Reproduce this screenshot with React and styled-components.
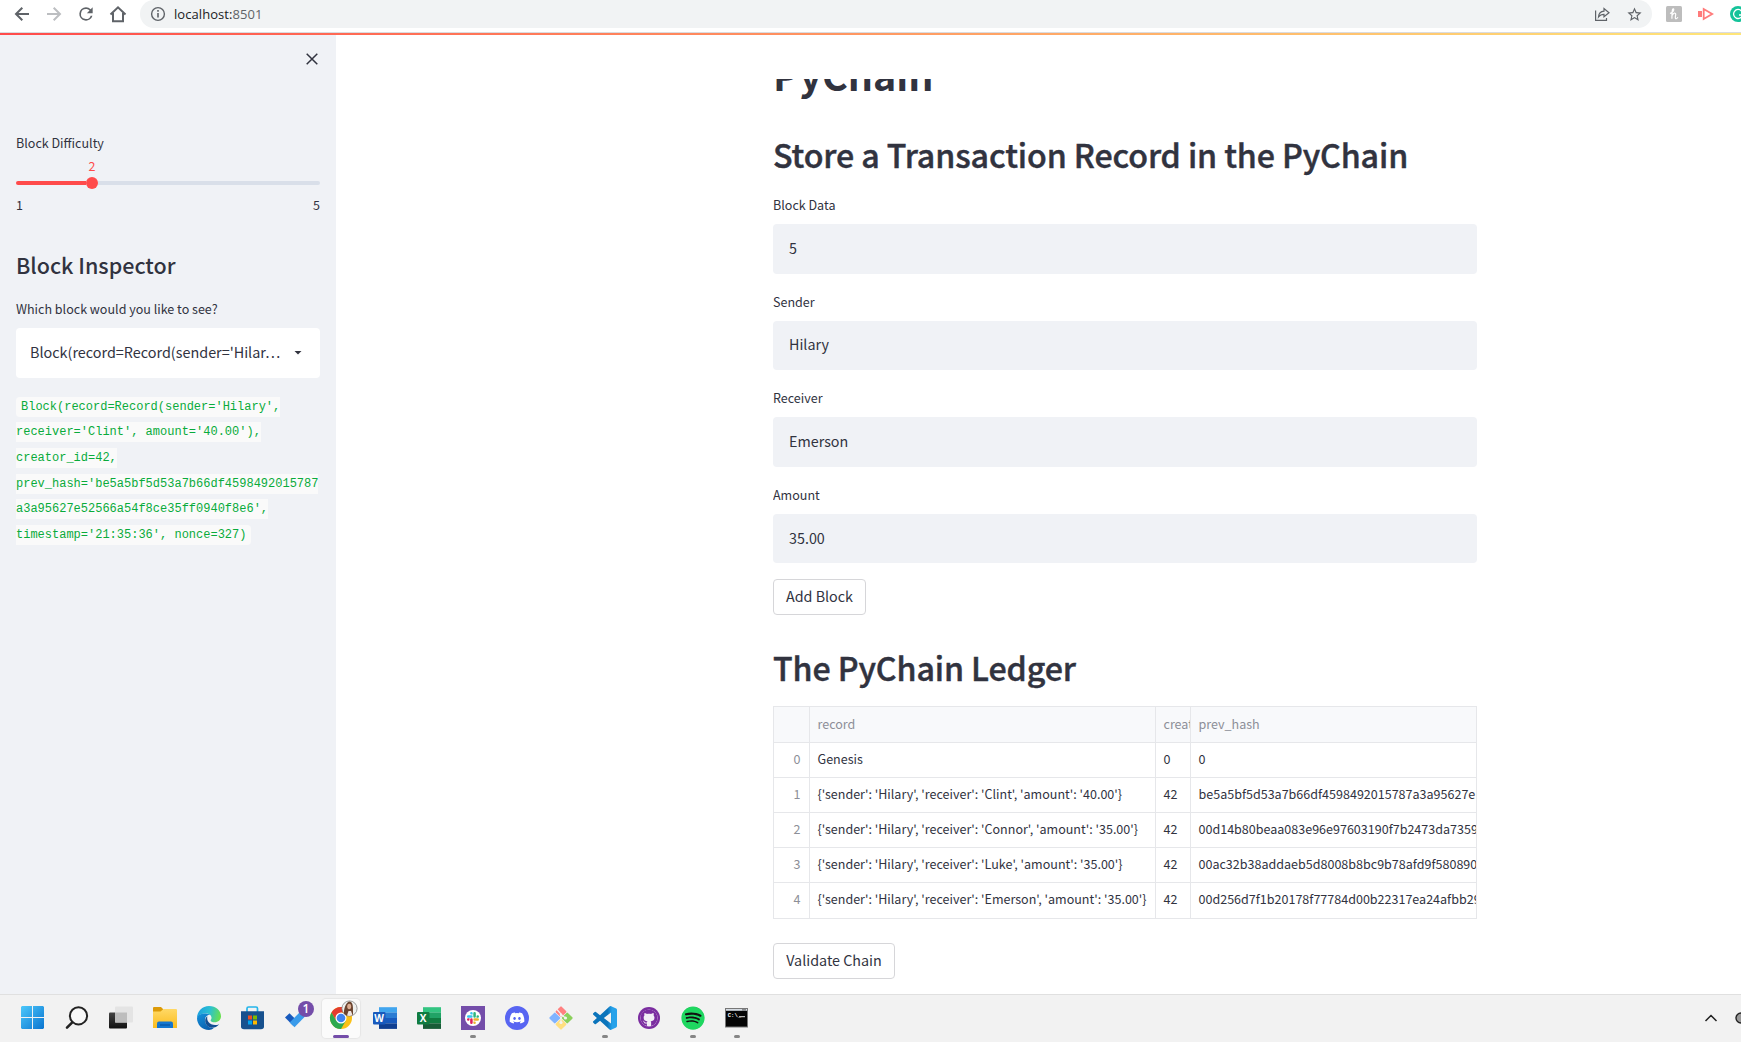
import React from "react";
import styled, { createGlobalStyle, css } from "styled-components";
import { FaDiscord, FaGithub, FaSpotify } from "react-icons/fa";

const SANS = `"Noto Sans CJK SC", "Noto Sans", sans-serif`;
const MONO = `"Liberation Mono", monospace`;

const GlobalStyle = createGlobalStyle`
  * { box-sizing: border-box; }
  html, body { margin: 0; padding: 0; overflow: hidden; }
  body { background: #fff; font-family: ${SANS}; color: #31333f; }
`;

const Screen = styled.div`
  width: 1741px;
  height: 1042px;
  display: flex;
  flex-direction: column;
  overflow: hidden;
`;

/* ---------- browser bar ---------- */
const BrowserBar = styled.header`
  flex: none;
  height: 33px;
  display: flex;
  align-items: flex-start;
  border-bottom: 1px solid #dadce0;
  padding-left: 12px;
  overflow: hidden;
`;

const NavButtons = styled.div`
  flex: none;
  width: 128px;
  height: 28px;
  display: flex;
  align-items: center;
  gap: 12px;
  svg { display: block; flex: none; }
`;

const AddressPill = styled.div`
  width: 1512px;
  height: 28px;
  flex: none;
  border-radius: 0 14px 14px 0;
  border-radius: 14px;
  background: #f1f3f4;
  display: flex;
  align-items: center;
  padding: 0 9px 0 8px;
  svg { display: block; flex: none; }
`;

const Address = styled.span`
  flex: 1;
  margin-left: 6px;
  font: 13px/20px "Open Sans", "Noto Sans", sans-serif;
  letter-spacing: 0.06px;
  color: #202124;
`;

const Port = styled.span`
  color: #5f6368;
`;

const Extensions = styled.div`
  display: flex;
  align-items: center;
  gap: ${(p) => p.$gap || 16}px;
  height: 28px;
  margin-left: 14px;
  flex: none;
  svg { display: block; flex: none; }
`;

const Decoration = styled.div`
  flex: none;
  height: 2px;
  background: linear-gradient(90deg, #ff4b4b, #fffd80 115%);
`;

/* ---------- page ---------- */
const Page = styled.div`
  flex: none;
  height: 959px;
  display: flex;
`;

const Sidebar = styled.aside`
  width: 336px;
  flex: none;
  background: #f0f2f6;
  padding: 16px 16px 0;
  display: flex;
  flex-direction: column;
`;

const CloseRow = styled.div`
  height: 16px;
  display: flex;
  justify-content: flex-end;
  svg { display: block; }
`;

const Label = styled.div`
  margin-top: ${(p) => p.$top || 0}px;
  padding-top: 1px;
  font-size: 12.54px;
  line-height: 21px;
  height: 22px;
  white-space: nowrap;
`;

const Slider = styled.div`
  margin-top: 2px;
  display: flex;
  flex-direction: column;
`;

const SliderValue = styled.div`
  width: 152px;
  height: 22px;
  line-height: 22px;
  text-align: center;
  font-size: 12.54px;
  color: #ff4b4b;
`;

const Track = styled.div`
  height: 12px;
  display: flex;
  align-items: center;
`;

const TrackPart = styled.div`
  height: 4px;
  width: ${(p) => p.$w}px;
  background: ${(p) => p.$c};
  border-radius: ${(p) => p.$r};
`;

const Thumb = styled.div`
  width: 12px;
  height: 12px;
  border-radius: 50%;
  background: #ff4b4b;
`;

const SliderEnds = styled.div`
  display: flex;
  justify-content: space-between;
  margin-top: 5px;
  font-size: 12.54px;
  line-height: 22px;
`;

const SideTitle = styled.h2`
  margin: 34px 0 0;
  font-size: 21.5px;
  line-height: 29px;
  font-weight: 500;
`;

const SelectBox = styled.div`
  margin-top: 8.5px;
  height: 50px;
  border-radius: 4px;
  background: #fff;
  display: flex;
  align-items: center;
  justify-content: space-between;
  padding: 0 16px 2px 14px;
  font-size: 14.4px;
  line-height: 24px;
  white-space: nowrap;
`;

const CodeBlock = styled.div`
  margin-top: 16.5px;
  display: flex;
  flex-direction: column;
  align-items: flex-start;
`;

const CodeLine = styled.div`
  height: 25.6px;
  display: flex;
  align-items: center;
`;

const Code = styled.code`
  display: block;
  height: 20px;
  line-height: 20px;
  font-family: ${MONO};
  font-size: 12px;
  color: #09ab3b;
  background: #fafafa;
  white-space: pre;
  ${(p) => p.$first && css`padding-left: 5px; border-radius: 4px 0 0 4px;`}
  ${(p) => p.$last && css`padding-right: 5px; border-radius: 0 4px 4px 0;`}
`;

const Main = styled.main`
  flex: 1;
  padding: 44px 0 0 437px;
`;

const Viewport = styled.div`
  width: 704px;
  height: 915px;
  overflow: hidden;
`;

const Title = styled.h1`
  margin: -32.5px 0 0;
  font-size: 39.4px;
  line-height: 53px;
  font-weight: 700;
`;

const Heading = styled.h2`
  margin: ${(p) => p.$top}px 0 0;
  font-size: 32.2px;
  line-height: 43px;
  font-weight: 500;
  letter-spacing: -0.11px;
  -webkit-text-stroke: 0.45px #31333f;
  white-space: nowrap;
`;

const Form = styled.div`
  margin-top: 17px;
  display: flex;
  flex-direction: column;
  gap: 16px;
`;

const Field = styled.div`
  display: flex;
  flex-direction: column;
  gap: 9px;
`;

const Input = styled.div`
  height: 49.6px;
  border-radius: 4px;
  background: #f0f2f6;
  padding: 0 16px 2px;
  display: flex;
  align-items: center;
  font-size: 14.33px;
  line-height: 24px;
`;

const Button = styled.button`
  display: block;
  height: 36px;
  width: ${(p) => p.$w}px;
  margin: ${(p) => p.$top}px 0 0;
  padding: 0 0 2px;
  border: 1px solid #d6d6d9;
  border-radius: 4px;
  background: #fff;
  font-family: ${SANS};
  font-size: 14.33px;
  line-height: 24px;
  color: #31333f;
  white-space: nowrap;
`;

const Table = styled.div`
  margin-top: 17px;
  width: 704px;
  height: 213px;
  border: 1px solid #e6e7ea;
  overflow: hidden;
`;

const Cell = styled.div`
  border-right: 1px solid #e6e7ea;
  border-bottom: 1px solid #e6e7ea;
  padding: 0 0 2px 7.5px;
  ${(p) => p.$index && css`padding: 0 8.5px 2px 0; text-align: right;`}
  ${(p) => p.$end && css`border-right: 0;`}
  font-size: 12.54px;
  line-height: ${(p) => (p.$muted && !p.$index ? 33 : 32)}px;
  color: ${(p) => (p.$muted ? "#8d8f98" : "#31333f")};
  white-space: nowrap;
  overflow: hidden;
`;

const Row = styled.div`
  display: grid;
  grid-template-columns: 36px 346px 35px 285px;
  height: ${(p) => (p.$head ? 36 : 35)}px;
  background: ${(p) => (p.$head ? "#f8f9fb" : "#fff")};
  &:last-child { height: 36px; }
  &:last-child ${Cell} { border-bottom: 0; }
`;

/* ---------- taskbar ---------- */
const Taskbar = styled.footer`
  flex: 1;
  display: flex;
  justify-content: space-between;
  background: #f2f2f2;
  border-top: 1px solid #e0e0e0;
  padding-left: 11px;
`;

const Apps = styled.div`
  display: flex;
`;

const AppSlot = styled.div`
  width: 44px;
  height: 47px;
  display: flex;
  flex-direction: column;
  align-items: center;
  padding-top: 3.5px;
`;

const Tile = styled.div`
  position: relative;
  width: 38px;
  height: 39px;
  display: flex;
  align-items: center;
  justify-content: center;
  border-radius: 4px;
  ${(p) => p.$active && css`background: #fbfbfb; box-shadow: 0 0 1px 1px #e6e6e6;`}
  svg { display: block; overflow: visible; }
`;

const Indicator = styled.span`
  position: absolute;
  left: ${(p) => (p.$active ? 11 : 16)}px;
  bottom: 0;
  width: ${(p) => (p.$active ? 16 : 6)}px;
  height: 3px;
  border-radius: 2px;
  background: ${(p) => (p.$active ? "#744da9" : "#858585")};
`;

const Badge = styled.span`
  position: absolute;
  left: 20px;
  top: 2px;
  width: 16px;
  height: 16px;
  border-radius: 50%;
  background: #744da9;
  color: #fff;
  font: 600 12px/16px "Open Sans", sans-serif;
  text-align: center;
`;

const Disc = styled.span`
  width: 24px;
  height: 24px;
  border-radius: 50%;
  background: #5865f2;
  color: #fff;
  display: flex;
  align-items: center;
  justify-content: center;
`;

const Tray = styled.div`
  display: flex;
  align-items: center;
  gap: 17px;
  padding-bottom: 2px;
  svg { display: block; }
`;

/* ---------- icons ---------- */
const stroke = { fill: "none", stroke: "#5f6368", strokeWidth: 2 };

const BackIcon = ({ color = "#5f6368", flip }) => (
  <svg width="20" height="20" viewBox="0 0 20 20">
    <path d="M17 10H4.5M10.3 3.7L4 10l6.3 6.3" {...stroke} stroke={color}
      transform={flip ? "matrix(-1 0 0 1 20 0)" : undefined} />
  </svg>
);

const ReloadIcon = () => (
  <svg width="20" height="20" viewBox="0 0 24 24">
    <path fill="#5f6368" d="M17.65 6.35A7.96 7.96 0 0 0 12 4a8 8 0 1 0 7.73 10h-2.08A6 6 0 1 1 12 6c1.66 0 3.14.69 4.22 1.78L13 11h7V4z" />
  </svg>
);

const HomeIcon = () => (
  <svg width="20" height="20" viewBox="0 0 20 20">
    <path d="M2.500 10.500L10 3.300l7.500 7.200M5 9V17.200h10V9" {...stroke} />
  </svg>
);

const InfoIcon = () => (
  <svg width="20" height="20" viewBox="0 0 20 20">
    <circle cx="10" cy="10" r="6.400" fill="none" stroke="#5f6368" strokeWidth="1.400" />
    <path d="M10 9v4.500M10 6v1.700" stroke="#5f6368" strokeWidth="1.600" />
  </svg>
);

const ShareIcon = () => (
  <svg width="16" height="16" viewBox="0 0 16 16" fill="none" stroke="#5f6368" strokeWidth="1.200">
    <path d="M1.600 4.500V14.400H12.500V12" />
    <path d="M4.500 11C4.800 7.300 6.600 5.400 10 5.200V2.600L15 6.700l-5 4.100V8.300C7.500 8.300 5.800 9.200 4.500 11z" />
  </svg>
);

const StarIcon = () => (
  <svg width="17" height="17" viewBox="0 0 24 24">
    <path fill="#5f6368" d="M22 9.240l-7.190-.620L12 2 9.190 8.630 2 9.240l5.460 4.730L5.820 21 12 17.270 18.180 21l-1.630-7.030zM12 15.400l-3.760 2.270 1-4.280-3.320-2.880 4.380-.380L12 6.100l1.710 4.040 4.380.380-3.320 2.880 1 4.280z" />
  </svg>
);

const HoneyIcon = () => (
  <svg width="16" height="16" viewBox="0 0 16 16">
    <rect width="16" height="16" rx="1.500" fill="#bdbdbd" />
    <path d="M4 7.500C7 6.500 8.500 3.500 7.400 2.900 6.300 2.500 6 5 5.900 12.800M6 9.500c1.200-3 4-3.200 3.700-1-.2 2-.9 4.300.3 4.300.8 0 1.400-.7 1.900-1.500" fill="none" stroke="#fff" strokeWidth="1.200" />
  </svg>
);

const CastIcon = () => (
  <svg width="16" height="14" viewBox="0 0 16 14">
    <rect x="0" y="4" width="4" height="6" fill="#ff7b7b" />
    <path d="M5.700 2V12L14.200 7z" fill="#fff" stroke="#ff7b7b" strokeWidth="1.800" />
  </svg>
);

const GrammarIcon = () => (
  <svg width="16" height="16" viewBox="0 0 16 16">
    <circle cx="8" cy="8" r="8" fill="#15c39a" />
    <path d="M11.500 5A4.500 4.500 0 1 0 12.500 9H9M12.500 9v3" fill="none" stroke="#fff" strokeWidth="1.300" />
  </svg>
);

const CloseIcon = () => (
  <svg width="16" height="16" viewBox="0 0 16 16">
    <path d="M2.700 2.700l10.600 10.600M13.300 2.700L2.700 13.300" stroke="#31333f" strokeWidth="1.500" />
  </svg>
);

const CaretIcon = () => (
  <svg width="12" height="8" viewBox="0 0 12 8">
    <path d="M2.500 3h7L6 6.600z" fill="#31333f" />
  </svg>
);

const WindowsIcon = () => (
  <svg width="24" height="24" viewBox="0 0 24 24">
    <defs>
      <linearGradient id="win" x1="0" y1="0" x2="1" y2="1" gradientUnits="objectBoundingBox">
        <stop offset="0" stopColor="#4cc8fb" />
        <stop offset="1" stopColor="#0a74d0" />
      </linearGradient>
    </defs>
    <path d="M1 0H11V11H0V1zM12 0H22L23 1V11H12zM0 12H11V23H1L0 22zM12 12H23V22L22 23H12z" fill="url(#win)" />
  </svg>
);

const SearchIcon = () => (
  <svg width="24" height="24" viewBox="0 0 24 24">
    <circle cx="13.500" cy="9.800" r="8.600" fill="#f7f7f7" stroke="#222" strokeWidth="2" />
    <path d="M7.300 16.300L2 21.600" stroke="#222" strokeWidth="2.600" strokeLinecap="round" />
  </svg>
);

const TaskViewIcon = () => (
  <svg width="24" height="24" viewBox="0 0 24 24">
    <defs>
      <linearGradient id="tv" x1="0" y1="0" x2="0" y2="1">
        <stop offset="0" stopColor="#444" />
        <stop offset="1" stopColor="#111" />
      </linearGradient>
    </defs>
    <rect x="0" y="6.500" width="18" height="16" rx="1" fill="url(#tv)" />
    <rect x="6" y=".5" width="18" height="16" rx="1" fill="#e4e4e4" />
    <rect x="6" y="6.500" width="12" height="10" fill="#bdbdbd" />
  </svg>
);

const FolderIcon = () => (
  <svg width="24" height="24" viewBox="0 0 24 24">
    <defs>
      <linearGradient id="fold" x1="0" y1="0" x2="0" y2="1">
        <stop offset="0" stopColor="#ffd966" />
        <stop offset="1" stopColor="#fbbc1e" />
      </linearGradient>
    </defs>
    <path d="M0 2Q0 1 1 1H8L10 3V7H0z" fill="#dc9a08" />
    <path d="M0 5.500H7.500L10.500 3H23Q24 3 24 4V22H0z" fill="url(#fold)" />
    <path d="M4 22V17.500Q4 15.500 6 15.500H18Q20 15.500 20 17.500V22z" fill="#1476cf" />
    <path d="M7 19H17" stroke="#095aa8" strokeWidth="1.500" />
  </svg>
);

const EdgeIcon = () => (
  <svg width="24" height="24" viewBox="0 0 24 24">
    <defs>
      <linearGradient id="edgeTop" x1="0" y1="0.300" x2="1" y2="0.500">
        <stop offset="0" stopColor="#1c9fe0" />
        <stop offset="0.500" stopColor="#2bc0d2" />
        <stop offset="1" stopColor="#67e04e" />
      </linearGradient>
      <linearGradient id="edgeSide" x1="0" y1="0" x2="0.600" y2="1">
        <stop offset="0" stopColor="#1593dc" />
        <stop offset="1" stopColor="#0a5fae" />
      </linearGradient>
    </defs>
    <path d="M0 12C.2 5 5.200 0 12 0 19 0 24 4.700 24 10.300c0 3.800-3 6-6.200 6-2.500 0-4.200-.9-4.200-1.900 0-.7.900-1 .9-2.600C14.500 9 12 7.400 9 7.400 4.500 7.400 1 9.500 0 12z" fill="url(#edgeTop)" />
    <path d="M0 12C.9 8.300 5 7.400 8.500 7.400c3 0 4.500 1.300 4.500 1.300C9.500 8.800 7.500 12 8 15c.7 5 5.500 7.500 9 6.800C15.500 23.200 13.500 24 12 24 5 24 0 18.500 0 12z" fill="url(#edgeSide)" />
    <path d="M10.500 10.200C7.500 12 7.300 17 10.500 20c3.300 2.900 8.500 2.200 11.700-1.800-4 1.800-8.700.7-10.700-2.200-1.500-2-1.600-4.200-1-5.800z" fill="#124f93" />
  </svg>
);

const StoreIcon = () => (
  <svg width="24" height="24" viewBox="0 0 24 24">
    <path d="M6 6V2.500Q6 1 7.500 1H15Q16.500 1 16.500 2.500V6" fill="none" stroke="#24b5ea" strokeWidth="1.700" />
    <path d="M0 5.200H23V20.500Q23 23.200 20 23.200H3Q0 23.200 0 20.500z" fill="#17518e" />
    <path d="M7 9.500h4v4h-4z" fill="#f25022" />
    <path d="M12 9.500h4v4h-4z" fill="#7fba00" />
    <path d="M7 14.500h4v4h-4z" fill="#00a4ef" />
    <path d="M12 14.500h4v4h-4z" fill="#ffb900" />
  </svg>
);

const TodoIcon = () => (
  <svg width="24" height="24" viewBox="0 0 24 24">
    <path d="M0 11.500L4.500 7.200l8 8-4.300 4.600z" fill="#185abd" />
    <path d="M4.700 16.500L15.500 5.500l5 4.500L9.500 21.300z" fill="#3a9bea" />
  </svg>
);

const ChromeIcon = () => (
  <svg width="24" height="24" viewBox="0 0 24 24">
    <circle cx="12" cy="12" r="11" fill="#fbc116" />
    <path d="M2.470 6.500A11 11 0 0 1 21.530 6.500H12L7.240 14.750z" fill="#e33b2e" />
    <path d="M2.470 6.500A11 11 0 0 0 12 23L16.760 14.750H7.240z" fill="#2da94f" />
    <circle cx="12" cy="12" r="5.500" fill="#fff" />
    <circle cx="12" cy="12" r="4.300" fill="#3f83f0" />
    <g transform="translate(20.500 2.500)">
      <circle r="7.600" fill="#eef0ef" stroke="#777" strokeWidth="0.700" />
      <path d="M-5.500 5.200C-6 2-4-6.500 0-7 4-6.500 3.500 0 3.500 3L3.500 6.500Q-2 9-5.500 5.200z" fill="#6b4430" />
      <ellipse cx="-.3" cy="-2" rx="2" ry="2.800" fill="#dcae94" />
      <path d="M-2.500 7L-1 2.500H1.500L3 6.500Q0 8-2.500 7z" fill="#efe5df" />
    </g>
  </svg>
);

const OfficeIcon = ({ letter, shades, tile }) => (
  <svg width="24" height="24" viewBox="0 0 24 24">
    {shades.map((c, i) => (
      <rect key={c} x="6" y={1.200 + i * 5.400} width="18" height="5.500" fill={c} />
    ))}
    <rect x="0" y="6" width="12.500" height="12.500" rx="1" fill={tile} />
    <text x="6.200" y="15.800" fontSize="10" fontWeight="700" fill="#fff" textAnchor="middle" fontFamily="Open Sans, sans-serif">{letter}</text>
  </svg>
);

const slackColours = ["#e01e5a", "#36c5f0", "#2eb67d", "#ecb22e"];

const SlackIcon = () => (
  <svg width="24" height="24" viewBox="0 0 24 24">
    <rect width="24" height="24" fill="#744da9" />
    <circle cx="12" cy="12" r="8" fill="#fff" />
    <g transform="translate(6 6) scale(0.500)">
      {slackColours.map((c, i) => (
        <path
          key={c}
          fill={c}
          transform={`rotate(${i * 90} 12 12)`}
          d="M5.042 15.165a2.528 2.528 0 0 1-2.520 2.523A2.528 2.528 0 0 1 0 15.165a2.527 2.527 0 0 1 2.522-2.520h2.520v2.520zM6.313 15.165a2.527 2.527 0 0 1 2.521-2.520 2.527 2.527 0 0 1 2.521 2.520v6.313A2.528 2.528 0 0 1 8.834 24a2.528 2.528 0 0 1-2.521-2.522v-6.313z"
        />
      ))}
    </g>
  </svg>
);

const GitIcon = () => (
  <svg width="24" height="24" viewBox="0 0 24 24">
    <g transform="rotate(45 12 12)">
      <rect x="3.500" y="3.500" width="8.200" height="8.200" rx="1" fill="#ff8080" />
      <rect x="12.300" y="3.500" width="8.200" height="8.200" rx="1" fill="#8bd05c" />
      <rect x="3.500" y="12.300" width="8.200" height="8.200" rx="1" fill="#80b3ff" />
      <rect x="12.300" y="12.300" width="8.200" height="8.200" rx="1" fill="#ffdf80" />
    </g>
    <path d="M7.500 3L12 8v8M12 8.500l4.500 3.500" fill="none" stroke="#f2f2f2" strokeWidth="1.200" />
    <circle cx="12" cy="8.800" r="1.300" fill="#f2f2f2" />
    <circle cx="12" cy="16.500" r="1.600" fill="#f2f2f2" />
    <circle cx="16.500" cy="12" r="1.600" fill="#f2f2f2" />
  </svg>
);

const CodeIcon = () => (
  <svg width="24" height="24" viewBox="0 0 24 24">
    <defs>
      <linearGradient id="vs" x1="0" y1="0" x2="1" y2="0">
        <stop offset="0.600" stopColor="#0b74bb" />
        <stop offset="0.800" stopColor="#27a2ea" />
      </linearGradient>
    </defs>
    <path fill="url(#vs)" d="M23.150 2.587L18.210.210a1.494 1.494 0 0 0-1.705.290l-9.460 8.630-4.120-3.128a.999.999 0 0 0-1.276.057L.327 7.261A1 1 0 0 0 .326 8.740L3.899 12 .326 15.260a1 1 0 0 0 .001 1.479L1.650 17.940a.999.999 0 0 0 1.276.057l4.120-3.128 9.460 8.630a1.492 1.492 0 0 0 1.704.290l4.942-2.377A1.500 1.500 0 0 0 24 20.060V3.939a1.500 1.500 0 0 0-.850-1.352zm-5.146 14.861L10.826 12l7.178-5.448v10.896z" />
  </svg>
);

const GithubIcon = () => (
  <svg width="24" height="24" viewBox="0 0 24 24">
    <circle cx="12" cy="12" r="11" fill="#7b2da0" />
    <circle cx="12" cy="12" r="8.600" fill="#f3eef6" />
    <FaGithub x="3.300" y="3.300" size={17.400} color="#7b2da0" />
  </svg>
);

const SpotifyIcon = () => (
  <svg width="24" height="24" viewBox="0 0 24 24">
    <circle cx="12" cy="12" r="11" fill="#111" />
    <FaSpotify x="0" y="0" size={24} color="#1ed760" />
  </svg>
);

const TerminalIcon = () => (
  <svg width="24" height="24" viewBox="0 0 24 24">
    <rect x=".5" y="2.500" width="22" height="18.500" fill="#050505" stroke="#777" />
    <rect x="1" y="3" width="21" height="1.800" fill="#d5dbe2" />
    <path d="M17 3.900h4" stroke="#555" strokeWidth="1" />
    <text x="2.800" y="11" fontSize="5.500" fontWeight="700" fill="#fff" fontFamily="Liberation Mono, monospace">C:\_</text>
    <path d="M14 10.700h6" stroke="#ddd" strokeWidth="1" />
  </svg>
);

const apps = [
  { icon: <WindowsIcon /> },
  { icon: <SearchIcon /> },
  { icon: <TaskViewIcon /> },
  { icon: <FolderIcon /> },
  { icon: <EdgeIcon /> },
  { icon: <StoreIcon /> },
  { icon: <TodoIcon />, badge: "1" },
  { icon: <ChromeIcon />, active: true },
  { icon: <OfficeIcon letter="W" shades={["#41a5ee", "#2b7cd3", "#185abd", "#103f91"]} tile="#185abd" /> },
  { icon: <OfficeIcon letter="X" shades={["#33c481", "#21a366", "#107c41", "#185c37"]} tile="#107c41" /> },
  { icon: <SlackIcon />, open: true },
  { icon: <Disc><FaDiscord size={16} /></Disc> },
  { icon: <GitIcon /> },
  { icon: <CodeIcon />, open: true },
  { icon: <GithubIcon /> },
  { icon: <SpotifyIcon />, open: true },
  { icon: <TerminalIcon />, open: true },
];

const codeLines = [
  "Block(record=Record(sender='Hilary',",
  "receiver='Clint', amount='40.00'),",
  "creator_id=42,",
  "prev_hash='be5a5bf5d53a7b66df4598492015787",
  "a3a95627e52566a54f8ce35ff0940f8e6',",
  "timestamp='21:35:36', nonce=327)",
];

const fields = [
  ["Block Data", "5"],
  ["Sender", "Hilary"],
  ["Receiver", "Emerson"],
  ["Amount", "35.00"],
];

const ledger = [
  ["Genesis", "0", "0"],
  ["{'sender': 'Hilary', 'receiver': 'Clint', 'amount': '40.00'}", "42", "be5a5bf5d53a7b66df4598492015787a3a95627e"],
  ["{'sender': 'Hilary', 'receiver': 'Connor', 'amount': '35.00'}", "42", "00d14b80beaa083e96e97603190f7b2473da7359"],
  ["{'sender': 'Hilary', 'receiver': 'Luke', 'amount': '35.00'}", "42", "00ac32b38addaeb5d8008b8bc9b78afd9f580890"],
  ["{'sender': 'Hilary', 'receiver': 'Emerson', 'amount': '35.00'}", "42", "00d256d7f1b20178f77784d00b22317ea24afbb29"],
];

export default function App() {
  return (
    <Screen>
      <GlobalStyle />
      <BrowserBar>
        <NavButtons>
          <BackIcon />
          <BackIcon color="#bcbec1" flip />
          <ReloadIcon />
          <HomeIcon />
        </NavButtons>
        <AddressPill>
          <InfoIcon />
          <Address>localhost:<Port>8501</Port></Address>
          <Extensions>
            <ShareIcon />
            <StarIcon />
          </Extensions>
        </AddressPill>
        <Extensions>
          <HoneyIcon />
          <CastIcon />
          <GrammarIcon />
        </Extensions>
      </BrowserBar>
      <Decoration />
      <Page>
        <Sidebar>
          <CloseRow><CloseIcon /></CloseRow>
          <Label $top={63.5}>Block Difficulty</Label>
          <Slider>
            <SliderValue>2</SliderValue>
            <Track>
              <TrackPart $w={70} $c="#ff4b4b" $r="2px 0 0 2px" />
              <Thumb />
              <TrackPart $w={222} $c="#d9dfe9" $r="0 2px 2px 0" />
            </Track>
            <SliderEnds><span>1</span><span>5</span></SliderEnds>
          </Slider>
          <SideTitle>Block Inspector</SideTitle>
          <Label $top={18.5}>Which block would you like to see?</Label>
          <SelectBox>
            <span>Block(record=Record(sender='Hilar…</span>
            <CaretIcon />
          </SelectBox>
          <CodeBlock>
            {codeLines.map((line, i) => (
              <CodeLine key={line}>
                <Code $first={i === 0} $last={i === codeLines.length - 1}>{line}</Code>
              </CodeLine>
            ))}
          </CodeBlock>
        </Sidebar>
        <Main>
          <Viewport>
            <Title>PyChain</Title>
            <Heading $top={33.5}>Store a Transaction Record in the PyChain</Heading>
            <Form>
              {fields.map(([label, value]) => (
                <Field key={label}>
                  <Label>{label}</Label>
                  <Input>{value}</Input>
                </Field>
              ))}
            </Form>
            <Button $w={93} $top={15.6}>Add Block</Button>
            <Heading $top={30.7}>The PyChain Ledger</Heading>
            <Table>
              <Row $head>
                <Cell $muted />
                <Cell $muted>record</Cell>
                <Cell $muted>creator_id</Cell>
                <Cell $muted $end>prev_hash</Cell>
              </Row>
              {ledger.map(([record, creator, hash], i) => (
                <Row key={i}>
                  <Cell $muted $index>{i}</Cell>
                  <Cell>{record}</Cell>
                  <Cell>{creator}</Cell>
                  <Cell $end>{hash}</Cell>
                </Row>
              ))}
            </Table>
            <Button $w={122} $top={24}>Validate Chain</Button>
          </Viewport>
        </Main>
      </Page>
      <Taskbar>
        <Apps>
          {apps.map((app, i) => (
            <AppSlot key={i}>
              <Tile $active={app.active}>
                {app.icon}
                {app.badge && <Badge>{app.badge}</Badge>}
                {(app.open || app.active) && <Indicator $active={app.active} />}
              </Tile>
            </AppSlot>
          ))}
        </Apps>
        <Tray>
          <svg width="14" height="10" viewBox="0 0 14 10">
            <path d="M1.500 8L7 2.500 12.500 8" fill="none" stroke="#222" strokeWidth="1.500" />
          </svg>
          <svg width="6" height="12" viewBox="0 0 6 12">
            <circle cx="6" cy="6" r="5" fill="#999" stroke="#222" strokeWidth="1.400" />
          </svg>
        </Tray>
      </Taskbar>
    </Screen>
  );
}
